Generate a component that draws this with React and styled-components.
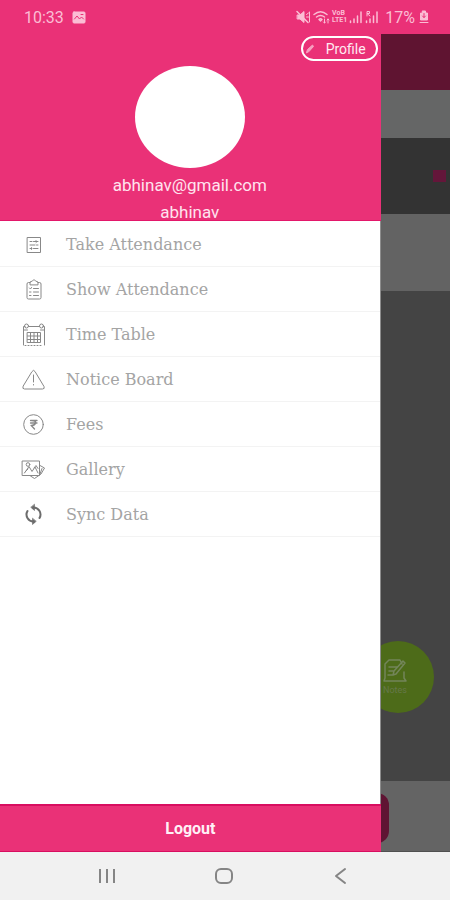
import React from "react";
import styled, { createGlobalStyle } from "styled-components";

const PINK = "#ea3177";

const GlobalStyle = createGlobalStyle`
  * { box-sizing: border-box; }
  body { margin: 0; font-family: Roboto, "Liberation Sans", sans-serif; background: #f1f1f1; }
`;

const BaseButton = styled.button`
  padding: 0;
  border: 0;
  background: none;
  font-family: inherit;
  cursor: pointer;
`;

const Screen = styled.div`
  display: flex;
  flex-direction: column;
  min-height: 100vh;
`;

const StatusBar = styled.header`
  display: flex;
  align-items: center;
  justify-content: space-between;
  height: 34px;
  padding: 0 21px 0 24px;
  background: ${PINK};
  color: #fbbdd4;
  font-size: 16px;
`;

const StatusGroup = styled.div`
  display: flex;
  align-items: center;
  gap: ${(p) => p.$gap}px;
`;

const Stack = styled.div`
  flex: 1;
  display: grid;
  grid-template: 1fr / 1fr;
`;

const Page = styled.div`
  grid-area: 1 / 1;
  display: flex;
  flex-direction: column;
`;

const Band = styled.div`
  display: flex;
  align-items: center;
  justify-content: flex-end;
  height: ${(p) => p.$height}px;
  padding-right: 4px;
  background: ${(p) => p.$color};
`;

const Marker = styled.span`
  width: 13px;
  height: 12px;
  background: #64163a;
`;

const PageBody = styled.div`
  flex: 1;
  display: flex;
  align-items: flex-end;
  justify-content: flex-end;
  padding: 0 16px 68px 0;
  background: #444444;
`;

const Fab = styled(BaseButton)`
  display: flex;
  flex-direction: column;
  align-items: center;
  justify-content: center;
  width: 72px;
  height: 72px;
  padding-right: 6px;
  border-radius: 50%;
  background: #4d6b19;
  color: #73855a;
`;

const FabLabel = styled.span`
  font-size: 9px;
  line-height: 14px;
  color: #66784a;
`;

const PageFooter = styled.div`
  height: 71px;
  padding: 12px 61px 8px 8px;
  background: #646464;
  border-bottom: 1px solid #505050;
`;

const PageAction = styled.div`
  height: 100%;
  border-radius: 12px;
  background: #5f1433;
`;

const Drawer = styled.aside`
  grid-area: 1 / 1;
  z-index: 1;
  display: flex;
  flex-direction: column;
  width: 84.6%;
  background: #ffffff;
  border-right: 1px solid #8d8d8d;
`;

const Profile = styled.section`
  display: flex;
  flex-direction: column;
  align-items: center;
  height: 187px;
  margin-right: -1px;
  padding: 2px 3px 0 2px;
  background: ${PINK};
  border-bottom: 1px solid #e3176a;
  color: #ffe3ee;
`;

const ProfileButton = styled(BaseButton)`
  flex-shrink: 0;
  align-self: flex-end;
  display: flex;
  align-items: center;
  justify-content: space-between;
  width: 77px;
  height: 25px;
  padding: 0 10px 0 2px;
  border: 2px solid #ffffff;
  border-radius: 13px;
  color: #ffe9f1;
  font-size: 14px;
`;

const Avatar = styled.div`
  flex-shrink: 0;
  width: 110px;
  height: 102px;
  margin: 5px 0;
  border-radius: 50%;
  background: #ffffff;
`;

const Identity = styled.div`
  font-size: 17px;
  line-height: 24px;
  & + & { margin-top: 3px; }
`;

const Menu = styled.nav`
  flex: 1;
  padding-top: 1px;
`;

const MenuItem = styled.a`
  display: flex;
  align-items: center;
  gap: 20px;
  height: 45px;
  padding-left: 21px;
  border-bottom: 1px solid #f3f3f3;
  color: #a4a4a4;
  font-family: "DejaVu Serif", serif;
  font-size: 16px;
  text-decoration: none;

  svg { color: #888888; }
`;

const Logout = styled(BaseButton)`
  height: 48px;
  margin-right: -1px;
  border-top: 2px solid #d80e60;
  border-bottom: 1px solid #d80e60;
  background: ${PINK};
  color: #fff0f6;
  font-size: 16px;
  font-weight: 700;
`;

const NavBar = styled.footer`
  display: flex;
  align-items: center;
  justify-content: space-between;
  height: 48px;
  padding: 0 97px 0 96px;
  background: #f1f1f1;
  color: #858585;
`;

const NavButton = styled(BaseButton)`
  display: flex;
  color: inherit;
`;

const Svg = ({ w = 24, h = w, sw = 1, children }) => (
  <svg width={w} height={h} viewBox={`0 0 ${w} ${h}`} fill="none" stroke="currentColor"
    strokeWidth={sw} strokeLinecap="round" strokeLinejoin="round" aria-hidden="true">
    {children}
  </svg>
);

const FormIcon = () => (
  <Svg w={25}>
    <path d="M6.500 5.500h13v15h-13zM9 9.500h2M12.500 9.500h4.500M9 13h5M15.500 13h1.500M9 16.500h2M12.500 16.500h4.500M15 8.500l1 1-1 1M10.500 15.500l-1 1 1 1" />
  </Svg>
);

const ClipboardIcon = () => (
  <Svg w={25}>
    <path d="M9 5.500H7.500Q6 5.500 6 7v13.500Q6 22 7.500 22h11q1.500 0 1.500-1.500V7q0-1.500-1.500-1.500H17M9 7.500V5l2.500-1Q13 1 14.500 4L17 5v2.500z" />
    <path d="M8.500 11l1 1 1-1.500M12.500 11.500h5M8.500 15h1.500M12.500 15h5M8.500 18.500h1.500M12.500 18.500h5" />
  </Svg>
);

const CalendarIcon = () => (
  <Svg w={25}>
    <path d="M2.500 23V4.500H4M7.500 4.500h11M22 4.500h1.500V23M2.500 8h4M19.500 8h4" />
    <circle cx="5.500" cy="4" r="2" /><circle cx="20.500" cy="4" r="2" />
    <path d="M6.500 10.500h13v10h-13zM6.500 14h13M6.500 17.500h13M9.500 10.500v10M13 10.500v10M16.500 10.500v10" />
    <path d="M4 23.500h18" strokeDasharray="1 2" />
  </Svg>
);

const WarningIcon = () => (
  <Svg w={25}>
    <path d="M11 4.500q1.500-2.500 3 0l9 15q1 2.500-1.500 2.500h-18q-2.500 0-1.500-2.500zM12.500 8v7M12.500 17.500v.5" />
  </Svg>
);

const RupeeIcon = () => (
  <Svg w={25}>
    <circle cx="12.500" cy="12.500" r="9.800" />
    <path d="M9.500 8.500h6.500M9.500 11h6.500M10.500 8.500q4.500 0 4 2.500t-4.500 2.300l3.500 3.700" strokeWidth="1.300" />
  </Svg>
);

const GalleryIcon = () => (
  <Svg w={25}>
    <path d="M1.500 4h17v14.500h-17zM3.500 16l4.500-6.500 3 5 3-4.500 3 6" />
    <circle cx="7" cy="7.500" r="1.800" />
    <path d="M19 8.500l4.500 2.500-3.500 6-6.500 4.500-4-2.500M19 17l2-5.500M4 15l3-3M13 11l2-2.500 2 3" />
  </Svg>
);

const SyncIcon = () => (
  <Svg w={25} sw={2}>
    <path d="M12 5.500a7 7 0 0 1 6.500 10.500M13 19.500a7 7 0 0 1-6.500-10.500" stroke="#6c6c6c" />
    <path d="M13.500 2.500v6L10 5.500zM11.500 16.500v6l3.500-3z" fill="#6c6c6c" stroke="#6c6c6c" strokeWidth=".6" />
  </Svg>
);

const PictureIcon = () => (
  <Svg w={14} h={13}>
    <rect x="1" y="1" width="12" height="11" rx="1" fill="currentColor" />
    <path d="M2.500 8l2.500-3 2.500 3 2-2 2 2M9 3.500h2" stroke={PINK} />
  </Svg>
);

const MuteIcon = () => (
  <Svg w={15} h={14}>
    <path d="M1.500 5h2.500l4-3.500v11L4 9H1.500z" fill="currentColor" />
    <path d="M1 1.500l11 11" strokeWidth="1.500" /><path d="M10.500 4.500l2-1.500M10.500 7h2M13.500 2v10" />
  </Svg>
);

const WifiIcon = () => (
  <Svg w={17} h={14} sw={1.4}>
    <path d="M1 4.500q6.500-5.500 13 0M3.500 7q4-3 8 0M6 9.500q1.500-1.500 3 0L7.500 11z" />
    <path d="M11.500 9v4M10.500 12l1 1 1-1M15 13V9M14 10l1-1 1 1" strokeWidth="1" />
  </Svg>
);

const NetworkLabel = styled.span`
  display: flex;
  flex-direction: column;
  font-size: 7px;
  line-height: 7px;
  font-weight: 700;
`;

const SignalIcon = ({ roaming }) => (
  <Svg w={14} sw={1.5}>
    <path d="M1.500 12.500v-1.500M5 12.500V9M8.500 12.500V6M12 12.500V2" />
    {roaming && <path d="M2 6V1.500h2.500v2H2l3 2.500" strokeWidth="1" />}
  </Svg>
);

const BatteryIcon = () => (
  <Svg w={10} h={14}>
    <path d="M3.500 1h3v2h2v7h-7V3h2zM1 12.500h8" fill="currentColor" />
    <path d="M5 3.500v4M3.500 6L5 7.500 6.500 6" stroke={PINK} />
  </Svg>
);

const PencilIcon = () => (
  <Svg w={10} h={12}>
    <path d="M1.500 9.500l1-3 5-4.500 1 1.500-4.500 5z" fill="#f7a0c1" stroke="#f7a0c1" />
  </Svg>
);

const NoteIcon = () => (
  <Svg w={27} h={25} sw={1.5}>
    <path d="M20 6l-2-4H7L3 6v14l-1 3h22l-2-3v-6M7 9h8M7 13h5M6 17h5M23 5l-9 11-3 1 1-4 9-10z" />
  </Svg>
);

const items = [
  ["Take Attendance", FormIcon],
  ["Show Attendance", ClipboardIcon],
  ["Time Table", CalendarIcon],
  ["Notice Board", WarningIcon],
  ["Fees", RupeeIcon],
  ["Gallery", GalleryIcon],
  ["Sync Data", SyncIcon],
];

export default function App() {
  return (
    <Screen>
      <GlobalStyle />
      <StatusBar>
        <StatusGroup $gap={8}><span>10:33</span><PictureIcon /></StatusGroup>
        <StatusGroup $gap={2}>
          <MuteIcon />
          <WifiIcon />
          <NetworkLabel><span>VoB</span><span>LTE1</span></NetworkLabel>
          <SignalIcon />
          <SignalIcon roaming />
          <StatusGroup $gap={4}><span>&nbsp;17%</span><BatteryIcon /></StatusGroup>
        </StatusGroup>
      </StatusBar>
      <Stack>
        <Page>
          <Band $height={56} $color="#5f1431" />
          <Band $height={48} $color="#656666" />
          <Band $height={76} $color="#333333"><Marker /></Band>
          <Band $height={77} $color="#636363" />
          <PageBody>
            <Fab aria-label="Notes"><NoteIcon /><FabLabel>Notes</FabLabel></Fab>
          </PageBody>
          <PageFooter><PageAction /></PageFooter>
        </Page>
        <Drawer>
          <Profile>
            <ProfileButton><PencilIcon />Profile</ProfileButton>
            <Avatar />
            <Identity>abhinav@gmail.com</Identity>
            <Identity>abhinav</Identity>
          </Profile>
          <Menu>
            {items.map(([label, Icon]) => (
              <MenuItem href="#" key={label}><Icon />{label}</MenuItem>
            ))}
          </Menu>
          <Logout>Logout</Logout>
        </Drawer>
      </Stack>
      <NavBar>
        <NavButton aria-label="Recent apps">
          <Svg w={22} h={18} sw={2}><path d="M4 2v14M11 2v14M18 2v14" strokeLinecap="butt" /></Svg>
        </NavButton>
        <NavButton aria-label="Home">
          <Svg w={20} h={18} sw={2}><rect x="2" y="2" width="16" height="14" rx="5" /></Svg>
        </NavButton>
        <NavButton aria-label="Back">
          <Svg w={24} h={18} sw={2}><path d="M16 2l-9 7 9 7" /></Svg>
        </NavButton>
      </NavBar>
    </Screen>
  );
}
